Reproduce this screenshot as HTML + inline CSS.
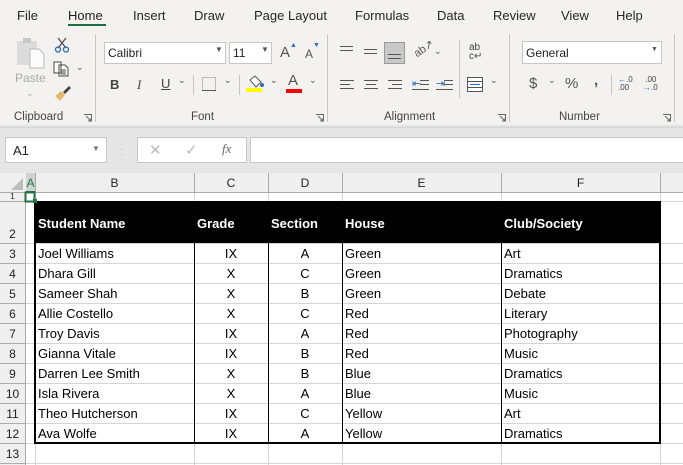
<!DOCTYPE html>
<html><head><meta charset="utf-8"><style>
*{margin:0;padding:0;box-sizing:border-box}
body{width:683px;height:465px;overflow:hidden;background:#fff;font-family:"Liberation Sans",sans-serif;position:relative}
.a{position:absolute}
.t{position:absolute;font-size:13px;color:#262626;top:8px}
.lbl{position:absolute;font-size:11.5px;color:#444;top:111px}
.vs{position:absolute;width:1px;background:#c8c6c4}
.ln{position:absolute;height:1px;background:#555}
.chev{position:absolute;font-size:9px;color:#555}
.cell{position:absolute;font-size:13px;color:#000;line-height:20px;white-space:nowrap;margin-top:1px}
.hdr{position:absolute;font-size:12px;color:#222;text-align:center;top:176px}
.rn{position:absolute;left:0;width:25px;text-align:center;font-size:12px;color:#222;margin-top:1px}
</style></head><body>
<div class="a" style="left:0;top:0;width:683px;height:127px;background:#f3f2f1"></div>
<div class="a" style="left:0;top:127px;width:683px;height:46px;background:#e6e6e6;border-top:1px solid #d6d6d6"></div>
<div class="t" style="left:17px">File</div>
<div class="t" style="left:68px;color:#1e1e1e">Home</div>
<div class="a" style="left:68px;top:24px;width:38px;height:2px;background:#1e6e42"></div>
<div class="t" style="left:133px">Insert</div>
<div class="t" style="left:194px">Draw</div>
<div class="t" style="left:254px">Page Layout</div>
<div class="t" style="left:355px">Formulas</div>
<div class="t" style="left:437px">Data</div>
<div class="t" style="left:493px">Review</div>
<div class="t" style="left:561px">View</div>
<div class="t" style="left:616px">Help</div>
<div class="vs" style="left:95px;top:34px;height:88px"></div>
<div class="vs" style="left:327px;top:34px;height:88px"></div>
<div class="vs" style="left:509px;top:34px;height:88px"></div>
<div class="vs" style="left:674px;top:34px;height:88px"></div>
<svg class="a" style="left:16px;top:37px" width="30" height="32"><rect x="1" y="4" width="20" height="24" fill="#dcdcdc"/><rect x="7" y="1" width="8" height="5" fill="#c8c8c8"/><path d="M14 12h9l5 5v14H14z" fill="#fbfbfb" stroke="#b8b8b8"/></svg>
<div class="a" style="left:15px;top:71px;font-size:12px;color:#a8a8a8">Paste</div>
<div class="chev" style="left:26px;top:88px;color:#aaa">⌄</div>
<svg class="a" style="left:54px;top:37px" width="16" height="16"><path d="M4 1l8 10M12 1L4 11" stroke="#555" stroke-width="1.4"/><circle cx="4" cy="12.5" r="2.5" fill="none" stroke="#2b6cb3" stroke-width="1.3"/><circle cx="12" cy="12.5" r="2.5" fill="none" stroke="#2b6cb3" stroke-width="1.3"/></svg>
<svg class="a" style="left:53px;top:61px" width="16" height="16"><path d="M1 1h7v11H1z M6 4h6l3 3v8H6z" fill="#fff" stroke="#444"/><path d="M8 9h5M8 11h5M8 13h5" stroke="#444"/></svg>
<div class="chev" style="left:76px;top:62px">⌄</div>
<svg class="a" style="left:53px;top:85px" width="18" height="18"><path d="M10 7l6-6 2 2-6 6z" fill="#444"/><path d="M2 11l6-5 4 4-5 6z" fill="#e3b96f"/></svg>
<div class="lbl" style="left:14px">Clipboard</div>
<svg class="a" style="left:84px;top:114px" width="8" height="8"><path d="M0 .5h7.5V7.5M2 2l5 5M4 7h3V4" fill="none" stroke="#666"/></svg>
<div class="a" style="left:104px;top:42px;width:122px;height:22px;background:#fff;border:1px solid #c6c6c6;font-size:12px;padding:3px 3px;color:#222">Calibri</div>
<div class="chev" style="left:215px;top:45px;font-size:8px">▼</div>
<div class="a" style="left:229px;top:42px;width:43px;height:22px;background:#fff;border:1px solid #c6c6c6;font-size:12px;padding:3px 3px;color:#222">11</div>
<div class="chev" style="left:261px;top:45px;font-size:8px">▼</div>
<div class="a" style="left:280px;top:44px;font-size:15px;color:#555">A</div><div class="a" style="left:290px;top:42px;font-size:7px;color:#2b6cb3">▲</div>
<div class="a" style="left:305px;top:47px;font-size:12px;color:#555">A</div><div class="a" style="left:313px;top:42px;font-size:7px;color:#2b6cb3">▼</div>
<div class="a" style="left:110px;top:77px;font-size:13px;font-weight:bold;color:#444">B</div>
<div class="a" style="left:137px;top:77px;font-size:13px;font-style:italic;font-family:'Liberation Serif',serif;color:#444">I</div>
<div class="a" style="left:161px;top:76px;font-size:13px;text-decoration:underline;color:#444">U</div>
<div class="chev" style="left:178px;top:75px">⌄</div>
<div class="vs" style="left:193px;top:75px;height:20px"></div>
<svg class="a" style="left:202px;top:77px" width="14" height="14"><rect x=".5" y=".5" width="13" height="13" fill="none" stroke="#888" stroke-dasharray="1 1"/><path d="M0 13.5h14" stroke="#555"/></svg>
<div class="chev" style="left:224px;top:75px">⌄</div>
<div class="vs" style="left:239px;top:75px;height:20px"></div>
<svg class="a" style="left:246px;top:75px" width="18" height="18"><path d="M4 5l5-4 6 6-5 5z" fill="#fff" stroke="#555"/><circle cx="16" cy="10" r="2" fill="#2b6cb3"/><rect x="0" y="13" width="16" height="4" fill="#ffff00"/></svg>
<div class="chev" style="left:270px;top:75px">⌄</div>
<div class="a" style="left:288px;top:72px;font-size:15px;color:#555">A</div>
<div class="a" style="left:286px;top:89px;width:16px;height:4px;background:#f00"></div>
<div class="chev" style="left:309px;top:75px">⌄</div>
<div class="lbl" style="left:191px">Font</div>
<svg class="a" style="left:316px;top:114px" width="8" height="8"><path d="M0 .5h7.5V7.5M2 2l5 5M4 7h3V4" fill="none" stroke="#666"/></svg>
<div class="ln" style="left:340px;top:46px;width:13px"></div><div class="ln" style="left:340px;top:50px;width:13px"></div>
<div class="ln" style="left:364px;top:49px;width:13px"></div><div class="ln" style="left:364px;top:53px;width:13px"></div>
<div class="a" style="left:384px;top:42px;width:21px;height:22px;background:#c8c8c8;border:1px solid #9a9a9a"></div>
<div class="ln" style="left:388px;top:54px;width:13px"></div><div class="ln" style="left:388px;top:58px;width:13px"></div>
<div class="a" style="left:413px;top:42px;font-size:11px;color:#555;transform:rotate(-35deg)">ab↗</div>
<div class="chev" style="left:434px;top:46px">⌄</div>
<div class="vs" style="left:459px;top:40px;height:58px"></div>
<div class="a" style="left:469px;top:43px;font-size:10px;line-height:9px;color:#444">ab<br>c↵</div>
<div class="ln" style="left:340px;top:80px;width:14px"></div><div class="ln" style="left:340px;top:84px;width:10px"></div><div class="ln" style="left:340px;top:88px;width:14px"></div>
<div class="ln" style="left:364px;top:80px;width:14px"></div><div class="ln" style="left:366px;top:84px;width:10px"></div><div class="ln" style="left:364px;top:88px;width:14px"></div>
<div class="ln" style="left:388px;top:80px;width:14px"></div><div class="ln" style="left:392px;top:84px;width:10px"></div><div class="ln" style="left:388px;top:88px;width:14px"></div>
<div class="a" style="left:412px;top:77px;font-size:11px;color:#2b6cb3">⇤</div><div class="ln" style="left:420px;top:80px;width:9px"></div><div class="ln" style="left:420px;top:84px;width:9px"></div><div class="ln" style="left:412px;top:89px;width:17px"></div>
<div class="a" style="left:436px;top:77px;font-size:11px;color:#2b6cb3">⇥</div><div class="ln" style="left:444px;top:80px;width:9px"></div><div class="ln" style="left:444px;top:84px;width:9px"></div><div class="ln" style="left:436px;top:89px;width:17px"></div>
<svg class="a" style="left:467px;top:77px" width="16" height="15"><rect x=".5" y=".5" width="15" height="14" fill="#fff" stroke="#555"/><path d="M0 4.5h16M0 10.5h16" stroke="#555"/><path d="M3 7.5h10" stroke="#2b6cb3"/></svg>
<div class="chev" style="left:490px;top:75px">⌄</div>
<div class="lbl" style="left:384px">Alignment</div>
<svg class="a" style="left:498px;top:114px" width="8" height="8"><path d="M0 .5h7.5V7.5M2 2l5 5M4 7h3V4" fill="none" stroke="#666"/></svg>
<div class="a" style="left:522px;top:41px;width:140px;height:23px;background:#fff;border:1px solid #c6c6c6;font-size:12px;padding:4px 3px;color:#222">General</div>
<div class="chev" style="left:651px;top:46px;font-size:7px">▼</div>
<div class="a" style="left:529px;top:75px;font-size:15px;color:#555">$</div>
<div class="chev" style="left:548px;top:75px">⌄</div>
<div class="a" style="left:565px;top:75px;font-size:15px;color:#555">%</div>
<div class="a" style="left:594px;top:72px;font-size:15px;font-weight:bold;color:#555">,</div>
<div class="vs" style="left:611px;top:75px;height:20px"></div>
<div class="a" style="left:618px;top:76px;font-size:8px;line-height:8px;color:#444"><span style="color:#2b6cb3">←</span>.0<br>.00</div>
<div class="a" style="left:643px;top:76px;font-size:8px;line-height:8px;color:#444">&nbsp;.00<br><span style="color:#2b6cb3">→</span>.0</div>
<div class="lbl" style="left:559px">Number</div>
<svg class="a" style="left:663px;top:114px" width="8" height="8"><path d="M0 .5h7.5V7.5M2 2l5 5M4 7h3V4" fill="none" stroke="#666"/></svg>
<div class="a" style="left:0;top:124px;width:683px;height:3px;background:linear-gradient(#f3f2f1,#dcdcdc)"></div>
<div class="a" style="left:5px;top:137px;width:102px;height:26px;background:#fff;border:1px solid #c6c6c6;font-size:13px;padding:5px 7px;color:#222">A1</div>
<div class="chev" style="left:92px;top:144px;font-size:8px;color:#777">▼</div>
<div class="a" style="left:120px;top:142px;font-size:10px;color:#bbb;line-height:5px">·<br>·<br>·</div>
<div class="a" style="left:137px;top:137px;width:110px;height:26px;background:#fff;border:1px solid #c6c6c6"></div>
<div class="a" style="left:149px;top:141px;font-size:15px;color:#bbb">✕</div>
<div class="a" style="left:185px;top:141px;font-size:15px;color:#bbb">✓</div>
<div class="a" style="left:222px;top:141px;font-size:13px;font-style:italic;font-family:'Liberation Serif',serif;color:#666">fx</div>
<div class="a" style="left:250px;top:137px;width:440px;height:26px;background:#fff;border:1px solid #c6c6c6"></div>
<div class="a" style="left:0;top:173px;width:683px;height:20px;background:#efefef;border-bottom:1px solid #ababab"></div>
<div class="a" style="left:0;top:193px;width:26px;height:272px;background:#efefef;border-right:1px solid #ababab"></div>
<svg class="a" style="left:11px;top:178px" width="12" height="12"><path d="M12 0V12H0z" fill="#bdbdbd"/></svg>
<div class="a" style="left:26px;top:173px;width:9px;height:20px;background:#d2d2d2;border-bottom:2px solid #217346"></div>
<div class="hdr" style="left:26px;width:9px;color:#217346">A</div>
<div class="hdr" style="left:35px;width:159px">B</div>
<div class="hdr" style="left:194px;width:74px">C</div>
<div class="hdr" style="left:268px;width:74px">D</div>
<div class="hdr" style="left:342px;width:159px">E</div>
<div class="hdr" style="left:501px;width:159px">F</div>
<svg class="a" style="left:0;top:173px" width="683" height="292">
<g stroke="#d4d4d4">
<path d="M35.5 0V292M194.5 0V292M268.5 0V292M342.5 0V292M501.5 0V292M660.5 0V292"/>
<path d="M26 28.5H683M26 70.5H683M26 90.5H683M26 110.5H683M26 130.5H683M26 150.5H683M26 170.5H683M26 190.5H683M26 210.5H683M26 230.5H683M26 250.5H683M26 270.5H683M26 290.5H683"/>
</g>
<g stroke="#ababab"><path d="M35.5 0V20M194.5 0V20M268.5 0V20M342.5 0V20M501.5 0V20M660.5 0V20"/>
<path d="M0 28.5H26M0 70.5H26M0 90.5H26M0 110.5H26M0 130.5H26M0 150.5H26M0 170.5H26M0 190.5H26M0 210.5H26M0 230.5H26M0 250.5H26M0 270.5H26M0 290.5H26"/></g>
<rect x="35" y="28" width="626" height="42" fill="#000"/>
<g stroke="#000"><path d="M194.5 70V270M268.5 70V270M342.5 70V270M501.5 70V270"/></g>
<rect x="35" y="29" width="625" height="241" fill="none" stroke="#000" stroke-width="2"/>
<rect x="26" y="20" width="9" height="8" fill="#fff"/>
<rect x="25.5" y="19.5" width="9" height="9" fill="none" stroke="#217346" stroke-width="2"/>
<rect x="33" y="26" width="4" height="4" fill="#217346"/>
</svg>
<div class="rn" style="top:191px;font-size:8px">1</div>
<div class="rn" style="top:226px">2</div>
<div class="rn" style="top:246px">3</div><div class="rn" style="top:266px">4</div><div class="rn" style="top:286px">5</div><div class="rn" style="top:306px">6</div><div class="rn" style="top:326px">7</div><div class="rn" style="top:346px">8</div><div class="rn" style="top:366px">9</div><div class="rn" style="top:386px">10</div><div class="rn" style="top:406px">11</div><div class="rn" style="top:426px">12</div><div class="rn" style="top:446px">13</div>
<div class="cell" style="left:38px;top:213px;color:#fff;font-weight:bold">Student Name</div>
<div class="cell" style="left:197px;top:213px;color:#fff;font-weight:bold">Grade</div>
<div class="cell" style="left:271px;top:213px;color:#fff;font-weight:bold">Section</div>
<div class="cell" style="left:345px;top:213px;color:#fff;font-weight:bold">House</div>
<div class="cell" style="left:504px;top:213px;color:#fff;font-weight:bold">Club/Society</div>
<div class="cell" style="left:38px;top:243px">Joel Williams</div><div class="cell" style="left:194px;width:74px;text-align:center;top:243px">IX</div><div class="cell" style="left:268px;width:74px;text-align:center;top:243px">A</div><div class="cell" style="left:345px;top:243px">Green</div><div class="cell" style="left:504px;top:243px">Art</div>
<div class="cell" style="left:38px;top:263px">Dhara Gill</div><div class="cell" style="left:194px;width:74px;text-align:center;top:263px">X</div><div class="cell" style="left:268px;width:74px;text-align:center;top:263px">C</div><div class="cell" style="left:345px;top:263px">Green</div><div class="cell" style="left:504px;top:263px">Dramatics</div>
<div class="cell" style="left:38px;top:283px">Sameer Shah</div><div class="cell" style="left:194px;width:74px;text-align:center;top:283px">X</div><div class="cell" style="left:268px;width:74px;text-align:center;top:283px">B</div><div class="cell" style="left:345px;top:283px">Green</div><div class="cell" style="left:504px;top:283px">Debate</div>
<div class="cell" style="left:38px;top:303px">Allie Costello</div><div class="cell" style="left:194px;width:74px;text-align:center;top:303px">X</div><div class="cell" style="left:268px;width:74px;text-align:center;top:303px">C</div><div class="cell" style="left:345px;top:303px">Red</div><div class="cell" style="left:504px;top:303px">Literary</div>
<div class="cell" style="left:38px;top:323px">Troy Davis</div><div class="cell" style="left:194px;width:74px;text-align:center;top:323px">IX</div><div class="cell" style="left:268px;width:74px;text-align:center;top:323px">A</div><div class="cell" style="left:345px;top:323px">Red</div><div class="cell" style="left:504px;top:323px">Photography</div>
<div class="cell" style="left:38px;top:343px">Gianna Vitale</div><div class="cell" style="left:194px;width:74px;text-align:center;top:343px">IX</div><div class="cell" style="left:268px;width:74px;text-align:center;top:343px">B</div><div class="cell" style="left:345px;top:343px">Red</div><div class="cell" style="left:504px;top:343px">Music</div>
<div class="cell" style="left:38px;top:363px">Darren Lee Smith</div><div class="cell" style="left:194px;width:74px;text-align:center;top:363px">X</div><div class="cell" style="left:268px;width:74px;text-align:center;top:363px">B</div><div class="cell" style="left:345px;top:363px">Blue</div><div class="cell" style="left:504px;top:363px">Dramatics</div>
<div class="cell" style="left:38px;top:383px">Isla Rivera</div><div class="cell" style="left:194px;width:74px;text-align:center;top:383px">X</div><div class="cell" style="left:268px;width:74px;text-align:center;top:383px">A</div><div class="cell" style="left:345px;top:383px">Blue</div><div class="cell" style="left:504px;top:383px">Music</div>
<div class="cell" style="left:38px;top:403px">Theo Hutcherson</div><div class="cell" style="left:194px;width:74px;text-align:center;top:403px">IX</div><div class="cell" style="left:268px;width:74px;text-align:center;top:403px">C</div><div class="cell" style="left:345px;top:403px">Yellow</div><div class="cell" style="left:504px;top:403px">Art</div>
<div class="cell" style="left:38px;top:423px">Ava Wolfe</div><div class="cell" style="left:194px;width:74px;text-align:center;top:423px">IX</div><div class="cell" style="left:268px;width:74px;text-align:center;top:423px">A</div><div class="cell" style="left:345px;top:423px">Yellow</div><div class="cell" style="left:504px;top:423px">Dramatics</div>
</body></html>
